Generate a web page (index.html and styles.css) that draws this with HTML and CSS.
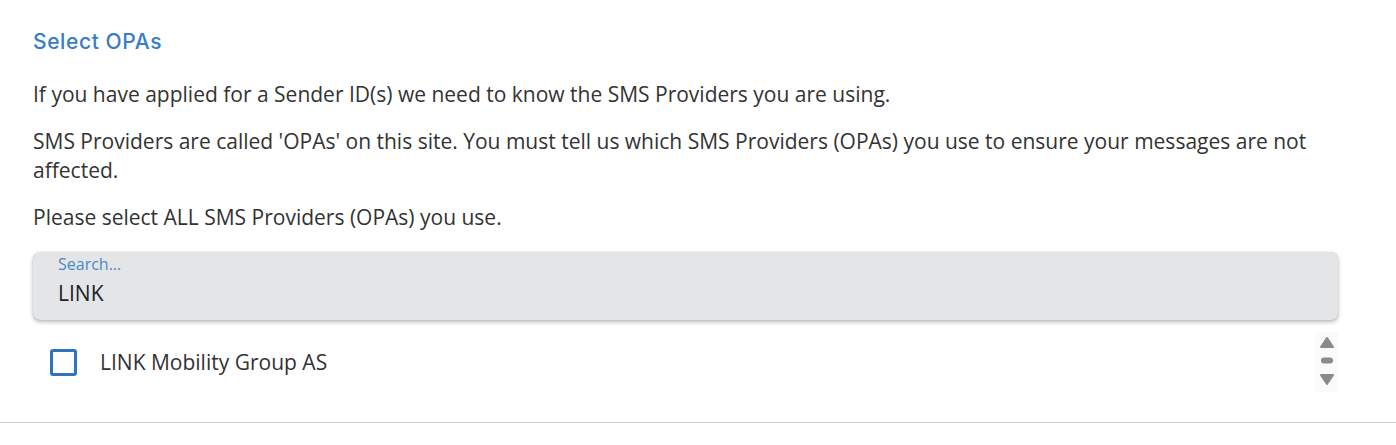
FILE: index.html
```html
<!DOCTYPE html>
<html lang="en">
<head>
<meta charset="utf-8">
<title>Select OPAs</title>
<link rel="stylesheet" href="styles.css">
</head>
<body>
<main class="panel">
  <h2 class="title">Select OPAs</h2>
  <p class="text">If you have applied for a Sender ID(s) we need to know the SMS Providers you are using.</p>
  <p class="text">SMS Providers are called 'OPAs' on this site. You must tell us which SMS Providers (OPAs) you use to ensure your messages are not affected.</p>
  <p class="text">Please select ALL SMS Providers (OPAs) you use.</p>
  <div class="search">
    <label class="search-label">Search...</label>
    <div class="search-value">LINK</div>
  </div>
  <div class="list">
    <div class="option">
      <span class="checkbox"></span>
      <span class="option-label">LINK Mobility Group AS</span>
    </div>
    <div class="scroller">
      <svg width="16" height="52" viewBox="0 0 16 52">
        <path d="M8 2 L14 11 L2 11 Z" fill="#8a8a8a" stroke="#8a8a8a" stroke-width="2" stroke-linejoin="round"/>
        <rect x="2" y="21.5" width="12" height="6" rx="3" fill="#8a8a8a"/>
        <path d="M2 39 L14 39 L8 48 Z" fill="#8a8a8a" stroke="#8a8a8a" stroke-width="2" stroke-linejoin="round"/>
      </svg>
    </div>
  </div>
</main>
</body>
</html>
```
FILE: styles.css
```css
html, body {
  margin: 0;
  padding: 0;
  background: #ffffff;
}
body {
  font-family: "Open Sans", "Noto Sans", sans-serif;
  color: #333;
}
.panel {
  padding: 28px 58px 0 33px;
  border-bottom: 1px solid #cfcfcf;
  height: 423px;
  box-sizing: border-box;
}
.title {
  margin: 0 0 24px 0;
  font-family: "Inter", "Open Sans", sans-serif;
  font-weight: 500;
  font-size: 21px;
  line-height: 28px;
  color: #3a7cc5;
  letter-spacing: 0.6px;
}
.text {
  margin: 0 0 18px 0;
  font-size: 21px;
  line-height: 29px;
  color: #333;
}
.search {
  margin-top: 20px;
  height: 68px;
  box-sizing: border-box;
  background: #e4e5e7;
  border-radius: 7px;
  box-shadow: 0 2px 4px rgba(0,0,0,0.28), 0 0 1px rgba(0,0,0,0.2);
  padding: 3px 24px 0 25px;
}
.search-label {
  display: block;
  font-size: 16px;
  line-height: 18px;
  color: #4a88c8;
}
.search-value {
  font-size: 21px;
  line-height: 40px;
  color: #222;
}
.list {
  display: flex;
  align-items: center;
  justify-content: space-between;
  padding: 12px 0 0 17px;
}
.option {
  display: flex;
  align-items: center;
  gap: 23px;
}
.checkbox {
  width: 21px;
  height: 21px;
  border: 3px solid #2f74c0;
  border-radius: 3px;
  display: inline-block;
}
.option-label {
  font-size: 21px;
  color: #333;
  line-height: 26px;
}
.scroller {
  width: 23px;
  height: 60px;
  background: #fafafa;
  display: flex;
  align-items: center;
  justify-content: center;
}
```
